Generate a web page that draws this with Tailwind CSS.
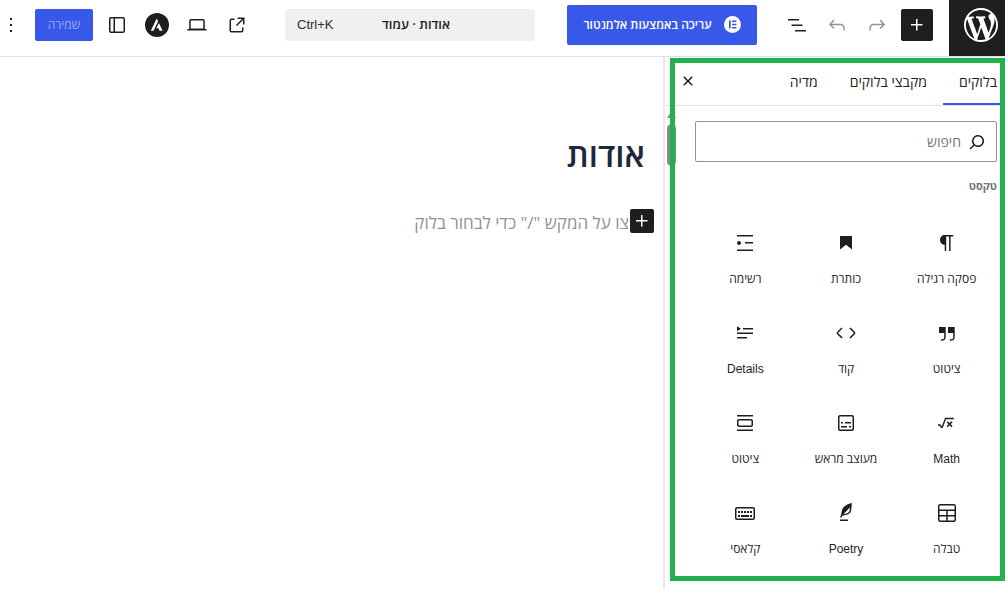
<!DOCTYPE html>
<html lang="he" dir="rtl">
<head>
    <meta charset="UTF-8">
    <meta name="viewport" content="width=device-width, initial-scale=1.0">
    <title>אודות · עמוד</title>
    <script src="https://cdn.jsdelivr.net/npm/@tailwindcss/browser@4"></script>
</head>
<body class="relative min-h-screen flex flex-col overflow-hidden bg-white text-[#1e1e1e] text-[13px] font-['Open_Sans','Liberation_Sans',sans-serif]">

    <!-- Top bar -->
    <header class="flex items-center border-b border-[#e0e0e0] pl-[3px]">
        <a href="#" aria-label="WordPress" class="flex size-14 shrink-0 items-start bg-[#1e1e1e] pt-2 pr-[7px] text-white ml-4">
            <svg class="size-[34px]" viewBox="0 0 20 20" fill="currentColor"><path d="M20 10c0-5.51-4.49-10-10-10C4.48 0 0 4.49 0 10c0 5.52 4.48 10 10 10 5.51 0 10-4.48 10-10zM7.78 15.37L4.37 6.22c.55-.02 1.17-.08 1.17-.08.5-.06.44-1.13-.06-1.11 0 0-1.45.11-2.37.11-.18 0-.37 0-.58-.01C4.12 2.69 6.87 1.11 10 1.11c2.33 0 4.45.87 6.05 2.34-.68-.11-1.65.39-1.65 1.58 0 .74.45 1.36.9 2.1.35.61.55 1.36.55 2.46 0 1.49-1.4 5-1.4 5l-3.03-8.37c.54-.02.82-.17.82-.17.5-.05.44-1.25-.06-1.22 0 0-1.44.12-2.38.12-.87 0-2.33-.12-2.33-.12-.5-.03-.56 1.2-.06 1.22l.92.08 1.26 3.41zM17.41 10c.24-.64.74-1.87.43-4.25.7 1.29 1.05 2.71 1.05 4.25 0 3.29-1.73 6.24-4.4 7.78.97-2.59 1.94-5.2 2.92-7.78zM6.1 18.09C3.12 16.65 1.11 13.53 1.11 10c0-1.3.23-2.48.72-3.59C3.25 10.3 4.67 14.2 6.1 18.09zm4.03-6.63l2.58 6.98c-.86.29-1.76.45-2.71.45-.79 0-1.57-.11-2.29-.33.81-2.38 1.62-4.74 2.42-7.1z"/></svg>
        </a>
        <div class="flex shrink-0 items-center gap-2 pb-[7px]">
            <button type="button" aria-label="הוספת בלוק" class="flex size-8 items-center justify-center rounded-xs bg-[#1e1e1e] text-white">
                <svg class="size-6" viewBox="0 0 24 24" fill="currentColor"><path d="M11 12.5V17.5H12.5V12.5H17.5V11H12.5V6H11V11H6V12.5H11Z"/></svg>
            </button>
            <button type="button" aria-label="ביצוע חוזר" class="flex size-8 items-center justify-center text-[#949494]">
                <svg class="size-6" viewBox="0 0 24 24" fill="currentColor"><path d="M15.6 6.5l-1.1 1 2.9 3.3H8c-.9 0-1.7.3-2.3.9-1.4 1.5-1.4 4.2-1.4 5.6v.2h1.5v-.3c0-1.1 0-3.5 1-4.5.3-.3.7-.5 1.3-.5h9.2L14.5 15l1.1 1.1 4.6-4.6-4.6-5z"/></svg>
            </button>
            <button type="button" aria-label="ביטול" class="flex size-8 items-center justify-center text-[#949494]">
                <svg class="size-6" viewBox="0 0 24 24" fill="currentColor"><path d="M18.3 11.7c-.6-.6-1.4-.9-2.3-.9H6.7l2.9-3.3-1.1-1-4.5 5L8.5 16l1-1-2.7-2.7H16c.5 0 .9.2 1.3.5 1 1 1 3.4 1 4.5v.3h1.5v-.2c0-1.5 0-4.3-1.5-5.7z"/></svg>
            </button>
            <button type="button" aria-label="סקירת המסמך" class="flex size-8 items-center justify-center">
                <svg class="size-6" viewBox="0 0 24 24" fill="currentColor"><path d="M3 6h11v1.5H3V6Zm3.5 5.5h11V13h-11v-1.5ZM21 17H10v1.5h11V17Z"/></svg>
            </button>
            <button type="button" class="mr-4 flex h-10 w-[190px] items-center justify-center gap-3 rounded-xs bg-[#3858e9] text-xs font-semibold text-white">
                <svg class="size-[17px]" viewBox="0 0 17 17"><circle cx="8.5" cy="8.5" r="8.5" fill="#fff"/><path fill="#3858e9" d="M5 4.500h1.700v8H5zM8 4.500h4.500v1.600H8zM8 7.700h4.500v1.600H8zM8 10.900h4.500v1.600H8z"/></svg>
                עריכה באמצעות אלמנטור
            </button>
        </div>
        <div class="flex flex-1 justify-center pb-[7px]">
            <button type="button" class="grid h-8 w-[250px] grid-cols-3 items-center rounded-sm bg-[#f0f0f0] pl-3">
                <span class="col-start-2 whitespace-nowrap font-semibold">אודות · עמוד</span>
                <span dir="ltr" class="text-left text-[#2f2f2f] font-['Liberation_Sans',sans-serif]">Ctrl+K</span>
            </button>
        </div>
        <div class="flex shrink-0 items-center gap-2 pb-[7px]">
            <a href="#" aria-label="הצגת העמוד" class="flex size-8 items-center justify-center">
                <svg class="size-6" viewBox="0 0 24 24" fill="currentColor"><path d="M19.5 4.5h-7V6h4.44l-5.97 5.97 1.06 1.06L18 7.06v4.44h1.5v-7Zm-13 1a2 2 0 0 0-2 2v10a2 2 0 0 0 2 2h10a2 2 0 0 0 2-2v-3H17v3a.5.5 0 0 1-.5.5h-10a.5.5 0 0 1-.5-.5v-10a.5.5 0 0 1 .5-.5h3V5.5h-3Z"/></svg>
            </a>
            <button type="button" aria-label="תצוגה" class="flex size-8 items-center justify-center">
                <svg class="size-6" viewBox="0 0 24 24" fill="currentColor"><path d="M20.5 16h-.7V8c0-1.1-.9-2-2-2H6.2c-1.1 0-2 .9-2 2v8h-.7c-.8 0-1.5.7-1.5 1.5h20c0-.8-.7-1.5-1.5-1.5zM5.7 8c0-.3.2-.5.5-.5h11.6c.3 0 .5.2.5.5v7.6H5.7V8z"/></svg>
            </button>
            <button type="button" aria-label="Astra" class="flex size-8 items-center justify-center">
                <svg class="size-6" viewBox="0 0 24 24"><circle cx="12" cy="12" r="12" fill="#1e1e1e"/><path fill="#fff" d="M11.7 5.5 5.8 17.7h2.7l4.6-9.4zM13.9 10l-2.6 5.2h2.3l1 2.5h3z"/></svg>
            </button>
            <button type="button" aria-label="הגדרות" class="flex size-8 items-center justify-center">
                <svg class="size-6" viewBox="0 0 24 24" fill="none" stroke="currentColor" stroke-width="1.5"><rect x="4.75" y="4.75" width="14.5" height="14.5" rx="1.25"/><path d="M9.25 4.75v14.5"/></svg>
            </button>
            <button type="button" disabled class="h-8 w-[58px] rounded-xs bg-[#3858e9] text-xs text-white/50">שמירה</button>
            <button type="button" aria-label="אפשרויות" class="mr-2 flex h-8 w-4 items-center justify-center">
                <svg class="size-6 shrink-0" viewBox="0 0 24 24" fill="currentColor"><path d="M13 19h-2v-2h2v2zm0-6h-2v-2h2v2zm0-6h-2V5h2v2z"/></svg>
            </button>
        </div>
    </header>

    <div class="flex flex-1">
        <!-- Block inserter -->
        <aside class="relative w-[342px] shrink-0 border-l-2 border-[#e8e8e8]">
            <div class="flex h-[49px] items-stretch border-b border-[#e0e0e0] text-sm">
                <div role="tablist" class="flex">
                    <button type="button" role="tab" aria-selected="true" class="border-b-2 border-[#3858e9] pt-1 pr-2 pl-4">בלוקים</button>
                    <button type="button" role="tab" class="border-b-2 border-transparent px-4 pt-1">מקבצי בלוקים</button>
                    <button type="button" role="tab" class="border-b-2 border-transparent px-4 pt-1">מדיה</button>
                </div>
                <button type="button" aria-label="סגירה" class="mr-auto ml-[11px]">
                    <svg class="size-6" viewBox="0 0 24 24" fill="currentColor"><path d="M12 13.06l3.712 3.713 1.061-1.06L13.061 12l3.712-3.712-1.06-1.06L12 10.938 8.288 7.227l-1.061 1.06L10.939 12l-3.712 3.712 1.06 1.061L12 13.061z"/></svg>
                </button>
            </div>

            <div class="pt-[15px] pr-2 pl-[30px]">
                <label class="flex h-[41px] items-center gap-1 rounded-xs border border-[#949494] px-[7px]">
                    <svg class="size-6" viewBox="0 0 24 24" fill="currentColor"><path d="M13 5c-3.3 0-6 2.7-6 6 0 1.4.5 2.7 1.3 3.7l-3.8 3.8 1.1 1.1 3.8-3.8c1 .8 2.3 1.3 3.7 1.3 3.3 0 6-2.7 6-6S16.3 5 13 5zm0 10.5c-2.5 0-4.5-2-4.5-4.5s2-4.5 4.5-4.5 4.5 2 4.5 4.5-2 4.5-4.5 4.5z"/></svg>
                    <input type="search" placeholder="חיפוש" aria-label="חיפוש" class="min-w-0 flex-1 text-sm outline-none placeholder:text-[#757575]">
                </label>
                <h2 class="mt-4 text-[11px] leading-4 font-bold text-[#757575]">טקסט</h2>

                <div class="mt-[25px] grid grid-cols-3 text-xs">
                    <button type="button" class="flex h-[90px] flex-col items-center gap-4 pt-3">
                        <svg class="size-6" viewBox="0 0 24 24" fill="currentColor"><path d="M18.3 4H9.9v-.1l-.9.2c-2.3.4-4 2.4-4 4.8s1.7 4.4 4 4.8l.7.1V20h1.5V5.5h2.9V20h1.5V5.5h2.7V4z"/></svg>
                        <span>פסקה רגילה</span>
                    </button>
                    <button type="button" class="flex h-[90px] flex-col items-center gap-4 pt-3">
                        <svg class="size-6" viewBox="0 0 24 24" fill="currentColor"><path d="M6 5V18.5911L12 13.8473L18 18.5911V5H6Z"/></svg>
                        <span>כותרת</span>
                    </button>
                    <button type="button" class="flex h-[90px] flex-col items-center gap-4 pt-3">
                        <svg class="size-6" viewBox="0 0 24 24" fill="currentColor"><path d="M4 4v1.5h16V4H4zm8 8.5h8V11h-8v1.5zM4 20h16v-1.5H4V20zm4-8c0-1.1-.9-2-2-2s-2 .9-2 2 .9 2 2 2 2-.9 2-2z"/></svg>
                        <span>רשימה</span>
                    </button>
                    <button type="button" class="flex h-[90px] flex-col items-center gap-4 pt-3">
                        <svg class="size-6" viewBox="0 0 24 24" fill="currentColor"><path d="M13 6v6h5.2v4c0 .8-.2 1.4-.5 1.7-.6.6-1.6.6-2.5.5h-.3v1.5h.5c1 0 2.3-.1 3.3-1 .6-.6 1-1.6 1-2.8V6H13zm-9 6h5.2v4c0 .8-.2 1.4-.5 1.7-.6.6-1.6.6-2.5.5h-.3v1.5h.5c1 0 2.3-.1 3.3-1 .6-.6 1-1.6 1-2.8V6H4v6z"/></svg>
                        <span>ציטוט</span>
                    </button>
                    <button type="button" class="flex h-[90px] flex-col items-center gap-4 pt-3">
                        <svg class="size-6" viewBox="0 0 24 24" fill="currentColor"><path d="M20.8 10.7l-4.3-4.3-1.1 1.1 4.3 4.3c.1.1.1.3 0 .4l-4.3 4.3 1.1 1.1 4.3-4.3c.7-.8.7-1.9 0-2.6zM4.2 11.8l4.3-4.3-1-1-4.3 4.3c-.7.7-.7 1.8 0 2.5l4.3 4.3 1.1-1.1-4.3-4.3c-.2-.1-.2-.3-.1-.4z"/></svg>
                        <span>קוד</span>
                    </button>
                    <button type="button" class="flex h-[90px] flex-col items-center gap-4 pt-3">
                        <svg class="size-6" viewBox="0 0 24 24" fill="currentColor"><path d="M4 16h10v1.5H4V16Zm0-4.5h16V13H4v-1.5ZM10 7h10v1.5H10V7Z"/><path d="m4 5.25 4 2.5-4 2.5v-5Z"/></svg>
                        <span class="font-['Liberation_Sans',sans-serif]">Details</span>
                    </button>
                    <button type="button" class="flex h-[90px] flex-col items-center gap-4 pt-3">
                        <svg class="size-6" viewBox="0 0 24 24" fill="currentColor"><path d="M11.2 6.8c-.7 0-1.4.5-1.6 1.1l-2.8 7.5-1.2-1.8c-.1-.2-.4-.3-.6-.3H3v1.5h1.6l1.2 1.8c.6.9 1.9.7 2.2-.3l2.9-7.9s.1-.2.2-.2h7.8V6.7h-7.8Zm5.3 3.4-1.9 1.9-1.9-1.9-1.1 1.1 1.9 1.9-1.9 1.9 1.1 1.1 1.9-1.9 1.9 1.9 1.1-1.1-1.9-1.9 1.9-1.9-1.1-1.1Z"/></svg>
                        <span class="font-['Liberation_Sans',sans-serif]">Math</span>
                    </button>
                    <button type="button" class="flex h-[90px] flex-col items-center gap-4 pt-3">
                        <svg class="size-6" viewBox="0 0 24 24" fill="currentColor"><path d="M18 4H6c-1.1 0-2 .9-2 2v12c0 1.1.9 2 2 2h12c1.1 0 2-.9 2-2V6c0-1.1-.9-2-2-2zm.5 14c0 .3-.2.5-.5.5H6c-.3 0-.5-.2-.5-.5V6c0-.3.2-.5.5-.5h12c.3 0 .5.2.5.5v12zM7 16.5h6V15H7v1.5zm4-4h6V11h-6v1.5zM9 11H7v1.5h2V11zm6 5.5h2V15h-2v1.5z"/></svg>
                        <span>מעוצב מראש</span>
                    </button>
                    <button type="button" class="flex h-[90px] flex-col items-center gap-4 pt-3">
                        <svg class="size-6" viewBox="0 0 24 24" fill="currentColor"><path d="M18 8H6c-1.1 0-2 .9-2 2v4c0 1.1.9 2 2 2h12c1.1 0 2-.9 2-2v-4c0-1.1-.9-2-2-2zm.5 6c0 .3-.2.5-.5.5H6c-.3 0-.5-.2-.5-.5v-4c0-.3.2-.5.5-.5h12c.3 0 .5.2.5.5v4zM4 4v1.5h16V4H4zm0 16h16v-1.5H4V20z"/></svg>
                        <span>ציטוט</span>
                    </button>
                    <button type="button" class="flex h-[90px] flex-col items-center gap-4 pt-3">
                        <svg class="size-6" viewBox="0 0 24 24" fill="none" stroke="currentColor" stroke-width="1.5"><rect x="3.75" y="3.75" width="16.5" height="16.5" rx="1.5"/><path d="M3.75 9.25h16.5M3.75 14.75h16.5M12 9.25v11"/></svg>
                        <span>טבלה</span>
                    </button>
                    <button type="button" class="flex h-[90px] flex-col items-center gap-4 pt-3">
                        <svg class="size-6" viewBox="0 0 24 24" fill="currentColor"><path d="M17.8 2l-.9.3c-.1 0-3.6 1-5.2 2.1C10 5.5 9.3 6.5 8.9 7.1c-.6.9-1.7 4.7-1.7 6.3l-.9 2.3c-.2.4 0 .8.4 1 .1 0 .2.1.3.1.3 0 .6-.2.7-.5l.6-1.5c.3 0 .7-.1 1.2-.2.7-.1 1.4-.3 2.2-.5.8-.2 1.6-.5 2.4-.8.7-.3 1.4-.7 1.9-1.2s.8-1.2 1-1.9c.2-.7.3-1.6.4-2.4.1-.8.1-1.7.2-2.5 0-.8.1-1.5.2-2.1V2zm-1.9 5.6c-.1.8-.2 1.5-.3 2.1-.2.6-.4 1-.6 1.3-.3.3-.8.6-1.4.9-.7.3-1.4.5-2.2.8-.6.2-1.3.3-1.8.4L15 7.5c.3-.3.6-.7 1-1.1 0 .4 0 .8-.1 1.2zM6 20h8v-1.5H6V20z"/></svg>
                        <span class="font-['Liberation_Sans',sans-serif]">Poetry</span>
                    </button>
                    <button type="button" class="flex h-[90px] flex-col items-center gap-4 pt-3">
                        <svg class="size-6" viewBox="0 0 24 24" fill="currentColor"><path d="M20 6H4c-1.1 0-2 .9-2 2v9c0 1.1.9 2 2 2h16c1.1 0 2-.9 2-2V8c0-1.1-.9-2-2-2zm.5 11c0 .3-.2.5-.5.5H4c-.3 0-.5-.2-.5-.5V8c0-.3.2-.5.5-.5h16c.3 0 .5.2.5.5v9zM10 10H8v2h2v-2zm-5 2h2v-2H5v2zm8-2h-2v2h2v-2zm-5 6h8v-2H8v2zm6-4h2v-2h-2v2zm3 0h2v-2h-2v2zm0 4h2v-2h-2v2zM5 16h2v-2H5v2z"/></svg>
                        <span>קלאסי</span>
                    </button>
                </div>
            </div>

            <!-- Scrollbar -->
            <div class="absolute top-[54px] left-[2px] flex w-[9px] flex-col items-center gap-[6px]">
                <svg class="h-[7px] w-[9px]" viewBox="0 0 9 7" fill="#8b8b8b"><path d="M4.5 0 9 7H0z"/></svg>
                <div class="h-[42px] w-[9px] rounded-full bg-[#8b8b8b]"></div>
            </div>
            <!-- Highlight frame -->
            <div class="pointer-events-none absolute top-px right-0 left-[5px] h-[523px] border-[5px] border-[#22b14c]"></div>
        </aside>

        <!-- Canvas -->
        <main class="flex-1 pt-[74px] pr-[18px] pl-4 text-[#1e293b]">
            <h1 class="text-[33px] leading-[48px] font-semibold">אודות</h1>
            <div class="relative mt-8 flex h-6 items-center">
                <p class="pr-4 text-[17px] leading-6 text-[#8b93a1]">צו על המקש "/" כדי לבחור בלוק</p>
                <button type="button" aria-label="הוספת בלוק" class="absolute -top-0.5 -right-[9px] flex size-6 items-center justify-center rounded-xs bg-[#1e1e1e] text-white">
                    <svg class="size-6" viewBox="0 0 24 24" fill="currentColor"><path d="M11 12.5V17.5H12.5V12.5H17.5V11H12.5V6H11V11H6V12.5H11Z"/></svg>
                </button>
            </div>
        </main>
    </div>
</body>
</html>
